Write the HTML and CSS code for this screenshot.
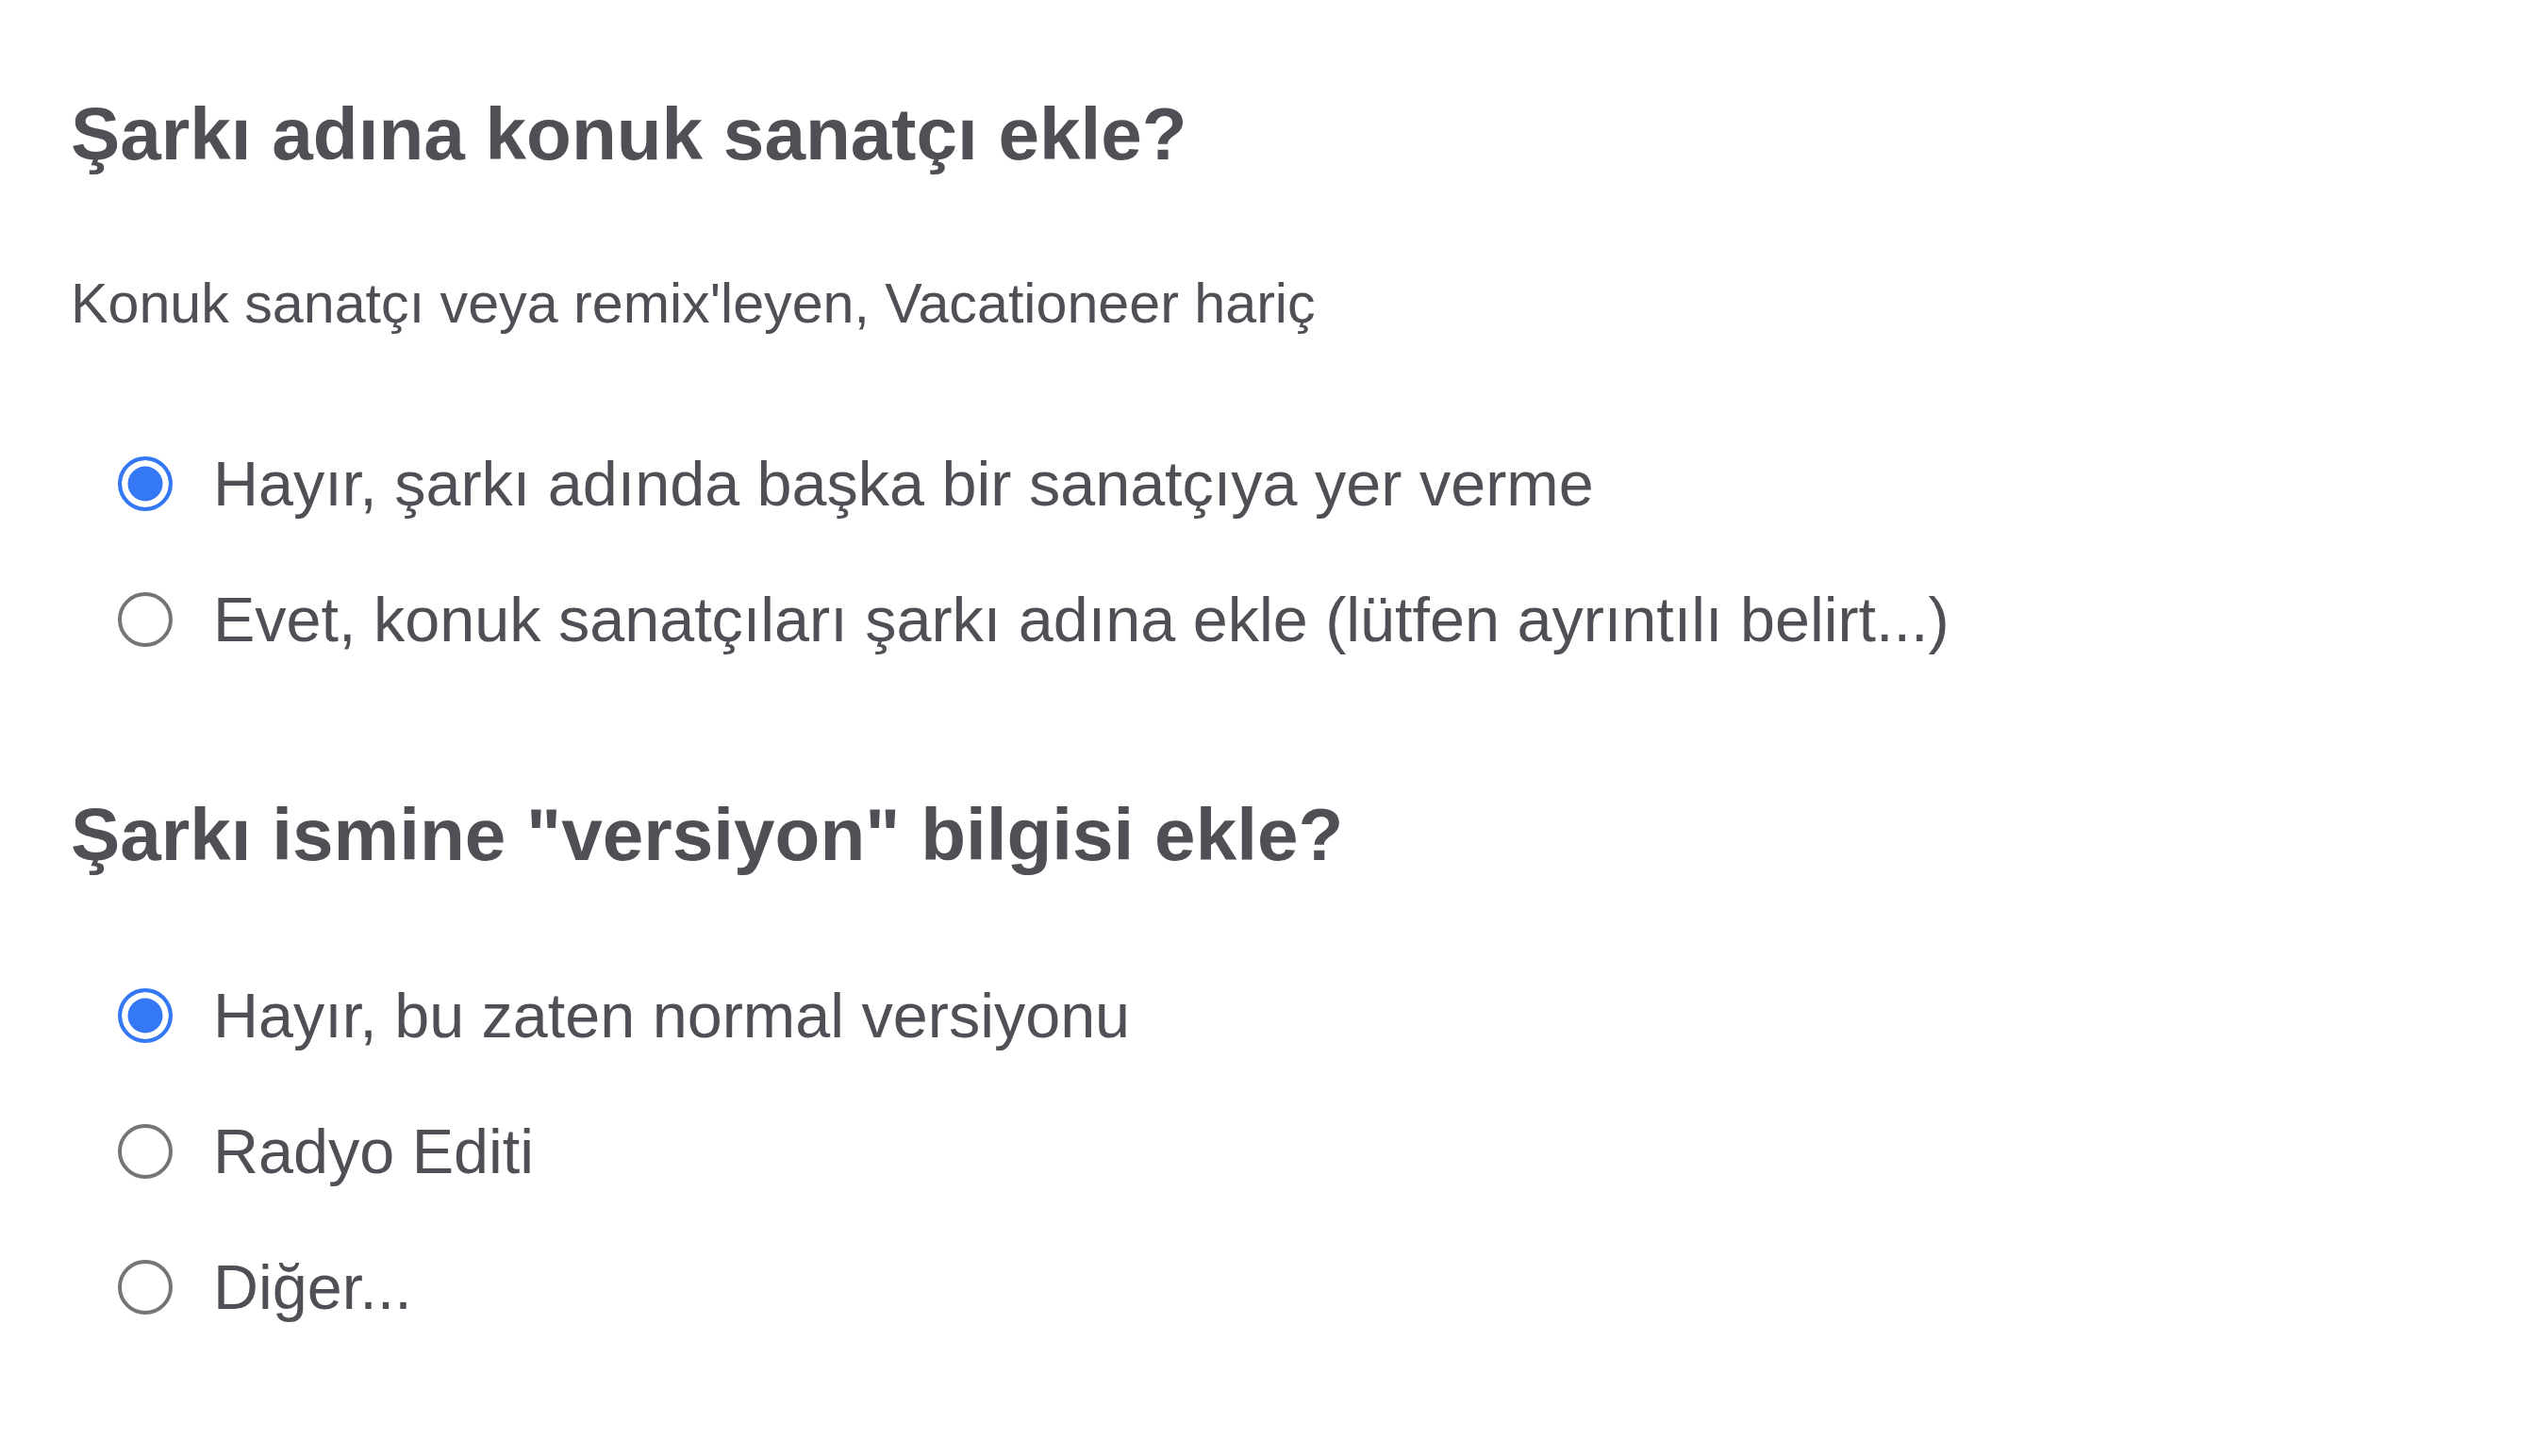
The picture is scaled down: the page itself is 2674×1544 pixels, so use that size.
FILE: index.html
```
<!DOCTYPE html>
<html lang="tr">
<head>
<meta charset="utf-8">
<title>Şarkı adı</title>
<link rel="stylesheet" href="styles.css">
</head>
<body>
<main class="page">
  <section class="group group-first">
    <h2 class="title">Şarkı adına konuk sanatçı ekle?</h2>
    <p class="subtitle">Konuk sanatçı veya remix'leyen, Vacationeer hariç</p>
    <div class="options options-after-sub">
      <label class="option"><span class="radio checked"></span><span class="label">Hayır, şarkı adında başka bir sanatçıya yer verme</span></label>
      <label class="option"><span class="radio"></span><span class="label">Evet, konuk sanatçıları şarkı adına ekle (lütfen ayrıntılı belirt...)</span></label>
    </div>
  </section>
  <section class="group group-second">
    <h2 class="title">Şarkı ismine "versiyon" bilgisi ekle?</h2>
    <div class="options options-after-title">
      <label class="option"><span class="radio checked"></span><span class="label">Hayır, bu zaten normal versiyonu</span></label>
      <label class="option"><span class="radio"></span><span class="label">Radyo Editi</span></label>
      <label class="option"><span class="radio"></span><span class="label">Diğer...</span></label>
    </div>
  </section>
</main>
</body>
</html>
```
FILE: styles.css
```
html, body {
  margin: 0;
  padding: 0;
  background: #ffffff;
}
body {
  font-family: "Liberation Sans", Arial, Helvetica, sans-serif;
  color: #4f5056;
}
.page {
  display: flex;
  flex-direction: column;
  padding: 104px 0 0 75px;
}
.group {
  display: flex;
  flex-direction: column;
}
.group-second {
  margin-top: 118px;
}
.title {
  margin: 0;
  font-size: 78.3px;
  line-height: 77.5px;
  font-weight: 700;
}
.subtitle {
  margin: 111px 0 0 0;
  font-size: 59.2px;
  line-height: 58px;
  font-weight: 400;
}
.options {
  display: flex;
  flex-direction: column;
  padding-left: 50px;
}
.options-after-sub {
  margin-top: 90px;
}
.options-after-title {
  margin-top: 81px;
}
.option {
  display: flex;
  align-items: center;
  height: 144px;
  gap: 43px;
}
.radio {
  flex: none;
  width: 58px;
  height: 58px;
  box-sizing: border-box;
  border-radius: 50%;
  border: 4px solid #757575;
  background: #ffffff;
}
.radio.checked {
  border: 4.5px solid #3478f6;
  background: #3478f6;
  box-shadow: inset 0 0 0 6.5px #ffffff;
}
.label {
  font-size: 66.5px;
  line-height: 144px;
}
```
